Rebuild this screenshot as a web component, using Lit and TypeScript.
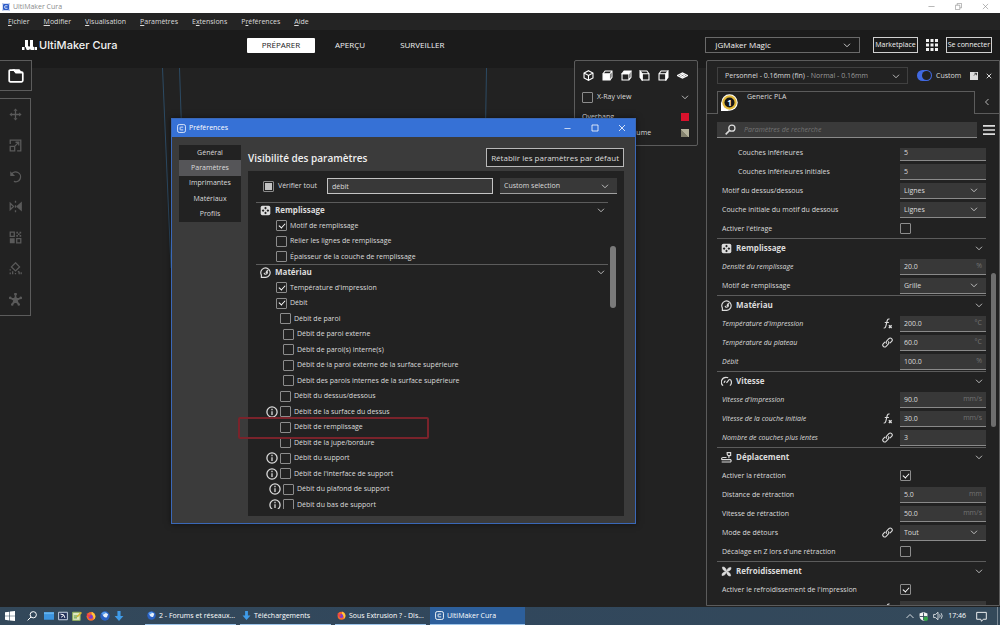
import { LitElement, html, css, svg, nothing, TemplateResult } from "lit";
import { customElement, property } from "lit/decorators.js";
import { classMap } from "lit/directives/class-map.js";

const base = css`
  * { box-sizing: border-box; }
  :host { font-family: "Open Sans", "Noto Sans", sans-serif; font-size: 7px; line-height: 10px; color: #dcdcdc; }
  button, input, select { font: inherit; color: inherit; margin: 0; padding: 0; border: 0; border-radius: 0; background: none; outline: 0; }
  button { display: flex; align-items: center; justify-content: center; white-space: nowrap; }
  svg { display: block; flex: none; }
  .check { appearance: none; flex: none; width: 11px; height: 11px; border: 1px solid #8c8c8c; border-radius: 1px; display: grid; place-items: center; }
  .check:checked::before { content: ""; width: 5px; height: 3px; border: solid #fff; border-width: 0 0 1px 1px; transform: translateY(-1px) rotate(-48deg); }
  .check:indeterminate::before { content: ""; width: 7px; height: 7px; background: #c4c4c4; }
  .combo { position: relative; display: flex; align-items: center; }
  .combo select { appearance: none; width: 100%; height: 100%; padding: 1px 18px 0 4px; }
  .combo svg { position: absolute; right: 8px; pointer-events: none; }
`;

const glyphs: Record<string, TemplateResult> = {
  chevron: svg`<path d="M2 5.500l6 6 6-6"/>`,
  left: svg`<path d="M11 2L5 8l6 6"/>`,
  close: svg`<path d="M2 2l12 12M14 2L2 14"/>`,
  min: svg`<path d="M1 8h14"/>`,
  max: svg`<path d="M2 2h12v12H2z"/>`,
  restore: svg`<path d="M1 5h10v10H1zM5 5V1h10v10h-4"/>`,
  folder: svg`<path d="M1.2 12.500V3.200q0-1 1-1h4l2 2h5.600q1 0 1 1v7.300q0 1.300-1.300 1.300H2.500q-1.300 0-1.300-1.300z"/><path d="M6 2.200h5l2 2.400H8z" fill="currentColor"/>`,
  move: svg`<path d="M8 3v10M3 8h10"/><path d="M8 .5l2.500 3h-5zM8 15.500l2.500-3h-5zM.5 8l3-2.500v5zM15.500 8l-3-2.500v5z" fill="currentColor" stroke="none"/>`,
  scale: svg`<path d="M1.500 6V1.500h13v13H10M1.500 9h5.500v5.500H1.500zM7.500 8.500l4-4M8 4h4v4"/>`,
  rotate: svg`<path d="M3 5.500A6 6 0 1 1 6 14"/><path d="M1.500 1.500v6h6z" fill="currentColor" stroke="none"/>`,
  mirror: svg`<path d="M8 1v2.500M8 6.500v3M8 12.500V15M1.500 4l4 4-4 4z"/><path d="M15 3.500v9L10 8z" fill="currentColor"/>`,
  mesh: svg`<path d="M1.500 1.500h5v5h-5zM9.500 9.500h5v5h-5z"/><path d="M1 9h6v6H1zM9 1h2v2H9zM13 1h2v2h-2zM11 3h2v2h-2zM9 5h2v2H9zM13 5h2v2h-2z" fill="currentColor" stroke="none"/>`,
  blocker: svg`<path d="M8 1l5 5-5 5-5-5z"/><path d="M1.500 9v1.500M1.500 13v2M4.500 11.500v3.500M8 13.500v1.500M11 11.500l1.500 1v2.500M15 12.500v2.500"/>`,
  star: svg`<path d="M8 4l1.200 3H13l-3 2 1.200 4L8 10.700 4.800 13 6 9 3 7h3.800z" fill="currentColor"/><path d="M8 1v3M1 6l3 1M15 6l-3 1M4 14l1-2M12 14l-1-2"/><circle cx="8" cy="1.500" r="1"/><circle cx="1.500" cy="6" r=".8"/><circle cx="14.500" cy="6" r=".8"/><circle cx="4" cy="14.200" r=".8"/><circle cx="12" cy="14.200" r=".8"/>`,
  cube: svg`<path d="M8 1l6.500 3.500v7L8 15l-6.500-3.500v-7zM1.500 4.500L8 8l6.500-3.500M8 8v7"/>`,
  cubeFront: svg`<path d="M1.500 5.500l3-4h10v9l-3 4M11.500 5.500l3-4"/><path d="M1.500 5.500h10v9h-10z" fill="currentColor"/>`,
  cubeTop: svg`<path d="M1.500 5.500h10v9h-10zM14.500 1.500v9l-3 4"/><path d="M1.500 5.500l3-4h10l-3 4z" fill="currentColor"/>`,
  cubeLeft: svg`<path d="M4.500 5.500h10v9h-10zM1.500 1.500h10l3 4"/><path d="M1.500 1.500l3 4v9l-3-4z" fill="currentColor"/>`,
  cubeRight: svg`<path d="M1.500 5.500h10v9h-10zM1.500 5.500l3-4h10"/><path d="M14.500 1.500l-3 4v9l3-4z" fill="currentColor"/>`,
  layers: svg`<path d="M.5 8L8 4.200 15.500 8 8 11.800zM5 8l3-1.500L11 8l-3 1.500z"/>`,
  search: svg`<circle cx="10" cy="6" r="4.500"/><path d="M6.500 9.500L1 15" stroke-width="2.400"/>`,
  burger: svg`<path d="M0 2.500h16M0 8h16M0 13.500h16"/>`,
  apps: svg`<path d="M0 0h4v4H0zM6 0h4v4H6zM12 0h4v4h-4zM0 6h4v4H0zM6 6h4v4H6zM12 6h4v4h-4zM0 12h4v4H0zM6 12h4v4H6zM12 12h4v4h-4z" fill="currentColor" stroke="none"/>`,
  save: svg`<path d="M0 0h16v16H0z" fill="currentColor" stroke="none"/><path d="M8 7l5-5M9 2.500h4v4" stroke="#222"/>`,
  info: svg`<circle cx="8" cy="8" r="6.800"/><path d="M8 7v5M8 3.800v1.800"/>`,
  infill: svg`<rect x="1" y="1" width="14" height="14" rx="2.500" fill="currentColor" stroke="none"/><path d="M8 2.500l2 2-2 2-2-2zM8 9.500l2 2-2 2-2-2zM4.500 6l2 2-2 2-2-2zM11.500 6l2 2-2 2-2-2z" fill="#222" stroke="none"/>`,
  material: svg`<path d="M2 15h6.500A6.800 6.800 0 1 0 2 11.500z"/><path d="M6 8.500a2.400 2.400 0 1 0 2.500-2.700M8.500 9L12 4"/>`,
  speed: svg`<path d="M3 14A6.800 6.800 0 0 1 8 2q1.500 0 2.500.5M13.500 5A6.800 6.800 0 0 1 13 14M8 10l4.500-5.500"/><path d="M4.500 10a3.500 3.500 0 0 1 2-3"/>`,
  travel: svg`<path d="M1 14.500h13q1.500-1.800 0-3.500H1M1 11q-.5-3 2-3h5M11.500 9V6M9 1v2q0 3 5 2V1z"/>`,
  cooling: svg`<path d="M8 8Q2 7 2 1.500q5-1 6 6.500zM8 8Q9 2 14.500 2q1 5-6.500 6zM8 8q6 1 6 6.500Q9 15.500 8 8zM8 8q-1 6-6.500 6Q.5 9 8 8z" fill="currentColor" stroke="currentColor" stroke-width=".8"/>`,
  fx: svg`<path d="M2.500 14.500q2.500.5 3.200-3L7.500 4q.8-3.200 3.500-2.500M4 6.500h6"/><path d="M10 10.500l4 4M14 10.500l-4 4" stroke-width="2"/>`,
  link: svg`<path d="M7 9.500Q5 7.500 7 5.500l3-3q2-2 4 0t0 4l-2.500 2.500M9 6.500q2 2 0 4l-3 3q-2 2-4 0t0-4L4.500 7"/>`,
  cura: svg`<rect x="1" y="1" width="14" height="14" rx="3"/><path d="M11 5.500H6.500q-1 0-1 1v3q0 1 1 1H11"/>`,
  windows: svg`<path d="M0 2l7-1v6.500H0zM8 .8L16 0v7.500H8zM0 8.500h7V15l-7-1zM8 8.500h8V16l-8-1z" fill="currentColor" stroke="none"/>`,
  finder: svg`<circle cx="10" cy="6" r="5"/><path d="M6.500 9.500L1 15"/>`,
  explorer: svg`<path d="M0 2h16v12H0z" fill="#3d95e0" stroke="none"/><path d="M0 2h16v3H0z" fill="#62b2ee" stroke="none"/>`,
  remote: svg`<path d="M1 2h14v12H1z" fill="#22305a" stroke="#c8d4e4"/><path d="M4 5l5 1 2 5M5 10l4-3" stroke="#fff"/>`,
  notes: svg`<path d="M1 2h12v13H1z" fill="#dfe8c0" stroke="#8fae5a"/><path d="M3 8h7M3 11h5" stroke="#5c9a3c"/><path d="M7 9l7-8 2 2-7 7z" fill="#d8b832" stroke="none"/>`,
  firefox: svg`<circle cx="8" cy="8.500" r="7" fill="#f5692c" stroke="none"/><path d="M9 1q6 3 6 8 0 3-3 5 1-6-3-7z" fill="#ffc83a" stroke="none"/><circle cx="7.500" cy="9" r="3.500" fill="#7d3ad0" stroke="none"/><path d="M1 4q2 0 3 2l4 1-3 3q-3 0-4-6z" fill="#f03a50" stroke="none"/>`,
  bird: svg`<circle cx="8" cy="8" r="7.500" fill="#2a62c4" stroke="none"/><path d="M4 6q4-5 9-1l-2 5q-4 2-7-4z" fill="#e6effa" stroke="none"/><path d="M2 4q4-4 9-2L5 6z" fill="#5ba0f0" stroke="none"/>`,
  down: svg`<path d="M5.500 0h5v8H15l-7 8-7-8h4.500z" fill="#3f9be8" stroke="none"/>`,
  up: svg`<path d="M1 12l7-7 7 7"/>`,
  shield: svg`<path d="M8 0l7 2.500v5Q15 13 8 16 1 13 1 7.500v-5z" fill="#f4f4f4" stroke="none"/><path d="M8 1v14M1 8h14" stroke="#34495a"/><circle cx="12" cy="12" r="4" fill="#35a84a" stroke="none"/>`,
  sound: svg`<path d="M1 5.500h3L8 2v12l-4-3.500H1zM10.500 5.500q2 2.500 0 5M13 3.500q3.500 4.500 0 9"/>`,
  bubble: svg`<path d="M1 2h14v10h-4.500L8 15l-1-3H1z"/>`,
};

const icon = (name: string, size = 10, weight = 1.6) => html`<svg width=${size} height=${size} viewBox="0 0 16 16" fill="none" stroke="currentColor" stroke-width=${weight} aria-hidden="true">${glyphs[name]}</svg>`;

interface Setting { label: string; level?: number; custom?: boolean; hint?: string; kind: "text" | "select" | "check"; value?: string; unit?: string; on?: boolean; }
interface Group { title?: string; icon?: string; rows: Setting[]; }

const groups: Group[] = [
  { rows: [
    { label: "Couches inférieures", level: 1, kind: "text", value: "5" },
    { label: "Couches inférieures initiales", level: 1, kind: "text", value: "5" },
    { label: "Motif du dessus/dessous", kind: "select", value: "Lignes" },
    { label: "Couche initiale du motif du dessous", kind: "select", value: "Lignes" },
    { label: "Activer l'étirage", kind: "check" },
  ] },
  { title: "Remplissage", icon: "infill", rows: [
    { label: "Densité du remplissage", custom: true, kind: "text", value: "20.0", unit: "%" },
    { label: "Motif de remplissage", kind: "select", value: "Grille" },
  ] },
  { title: "Matériau", icon: "material", rows: [
    { label: "Température d'impression", custom: true, hint: "fx", kind: "text", value: "200.0", unit: "°C" },
    { label: "Température du plateau", custom: true, hint: "link", kind: "text", value: "60.0", unit: "°C" },
    { label: "Débit", custom: true, kind: "text", value: "100.0", unit: "%" },
  ] },
  { title: "Vitesse", icon: "speed", rows: [
    { label: "Vitesse d'impression", custom: true, kind: "text", value: "90.0", unit: "mm/s" },
    { label: "Vitesse de la couche initiale", custom: true, hint: "fx", kind: "text", value: "30.0", unit: "mm/s" },
    { label: "Nombre de couches plus lentes", custom: true, hint: "link", kind: "text", value: "3" },
  ] },
  { title: "Déplacement", icon: "travel", rows: [
    { label: "Activer la rétraction", kind: "check", on: true },
    { label: "Distance de rétraction", kind: "text", value: "5.0", unit: "mm" },
    { label: "Vitesse de rétraction", kind: "text", value: "50.0", unit: "mm/s" },
    { label: "Mode de détours", hint: "link", kind: "select", value: "Tout" },
    { label: "Décalage en Z lors d'une rétraction", kind: "check" },
  ] },
  { title: "Refroidissement", icon: "cooling", rows: [
    { label: "Activer le refroidissement de l'impression", kind: "check", on: true },
    { label: "", hint: "fx", kind: "text", value: "" },
  ] },
];

@customElement("settings-panel")
class SettingsPanel extends LitElement {
  static styles = [base, css`
    :host { display: flex; flex-direction: column; background: #222; border: 1px solid #5c5c5c; border-radius: 2px 0 0 0; min-height: 0; }
    .profile { display: flex; align-items: center; height: 17px; margin: 6px 7px 7px 10px; }
    .profile .combo { flex: 1; height: 17px; border: 1px solid #404040; padding: 0 7px; margin-right: 9px; justify-content: flex-start; }
    .profile .dim { color: #9a9a9a; }
    .profile .combo svg { right: 7px; }
    .toggle { appearance: none; width: 15px; height: 11px; border-radius: 6px; background: #4169e1; display: flex; justify-content: flex-end; align-items: center; padding: 0 1px; }
    .toggle::before { content: ""; width: 9px; height: 9px; border-radius: 5px; background: #222; }
    .toggleLabel { flex: 0 0 34px; margin-left: 4px; }
    .profile button + button { margin-left: 8px; }
    .tabs { display: flex; height: 23px; }
    .tabs .edge { width: 10px; border-bottom: 1px solid #5c5c5c; }
    .tabs .tab { flex: 1; display: flex; align-items: flex-start; gap: 9px; border: 1px solid #5c5c5c; border-bottom: 0; padding: 0 3px; }
    .tabs .tab svg { margin-top: 2px; }
    .tabs .fold { width: 24px; border-bottom: 1px solid #5c5c5c; }
    .searchRow { display: flex; align-items: center; gap: 6px; margin: 8px 4px 10px 10px; height: 16px; }
    .search { flex: 1; display: flex; align-items: center; gap: 8px; height: 16px; background: #3a3a3a; border-bottom: 1px solid #8a8a8a; padding-left: 8px; }
    .search input { flex: 1; height: 14px; font-style: italic; min-width: 0; }
    .search input::placeholder { color: #747474; }
    .body { flex: 1; display: flex; min-height: 0; padding-left: 10px; }
    .list { flex: 1; overflow: hidden; min-width: 0; }
    .inner { margin-top: -5px; }
    .head { display: flex; align-items: center; gap: 4px; height: 19px; border-top: 1px solid #5c5c5c; padding: 0 3px 0 4px; font-size: 8px; font-weight: 700; }
    .head span { flex: 1; }
    .row { display: grid; grid-template-columns: 1fr 18px 86px; align-items: center; height: 19px; padding-left: 5px; }
    .row label { white-space: nowrap; }
    .row.sub { padding-left: 21px; }
    .row.custom label { font-style: italic; }
    .field, .row .combo { height: 16px; background: #383838; border-bottom: 1px solid #8a8a8a; }
    .field { display: flex; align-items: center; padding: 0 4px; }
    .field input { flex: 1; min-width: 0; width: 0; height: 14px; }
    .field span { color: #737373; }
    .track { width: 13px; padding: 125px 3px 0 5px; }
    .thumb { height: 154px; border-radius: 3px; background: #6e6e6e; }
  `];

  private control(s: Setting, id: string) {
    if (s.kind === "check") return html`<input class="check" type="checkbox" id=${id} .checked=${!!s.on}>`;
    if (s.kind === "select") return html`<div class="combo"><select id=${id}><option>${s.value}</option></select>${icon("chevron", 8)}</div>`;
    return html`<div class="field"><input id=${id} type="text" .value=${s.value ?? ""}>${s.unit ? html`<span>${s.unit}</span>` : nothing}</div>`;
  }

  render() {
    return html`
      <div class="profile">
        <button class="combo"><span>Personnel - 0.16mm (fin) <span class="dim">- Normal - 0.16mm</span></span>${icon("chevron", 8)}</button>
        <input class="toggle" type="checkbox" id="custom" checked>
        <label class="toggleLabel" for="custom">Custom</label>
        <button aria-label="Enregistrer">${icon("save", 8)}</button>
        <button aria-label="Fermer">${icon("close", 6, 2.6)}</button>
      </div>
      <div class="tabs">
        <div class="edge"></div>
        <div class="tab">
          <svg width="17" height="17" viewBox="0 0 17 17"><path d="M0 8v9h8z" fill="#fff"/><circle cx="8.500" cy="8.500" r="8.200" fill="#fff"/><circle cx="8.500" cy="8.500" r="7.200" fill="#e2b93a"/><circle cx="8.500" cy="8.500" r="5" fill="#171717"/><text x="8.500" y="11.500" text-anchor="middle" font-size="8" font-weight="700" fill="#fff">1</text></svg>
          <span>Generic PLA</span>
        </div>
        <button class="fold" aria-label="Réduire">${icon("left", 8)}</button>
      </div>
      <div class="searchRow">
        <div class="search">${icon("search", 11, 1.8)}<input type="text" aria-label="Paramètres de recherche" placeholder="Paramètres de recherche"></div>
        <button aria-label="Menu">${icon("burger", 12, 2.2)}</button>
      </div>
      <div class="body">
        <div class="list"><div class="inner">
          ${groups.map((g, gi) => html`
            ${g.title ? html`<div class="head">${icon(g.icon!, 11, 1.7)}<span>${g.title}</span>${icon("chevron", 8)}</div>` : nothing}
            ${g.rows.map((s, i) => html`
              <div class=${classMap({ row: true, sub: !!s.level, custom: !!s.custom })}>
                <label for=${`s${gi}-${i}`}>${s.label}</label>
                <span>${s.hint ? icon(s.hint, 11) : nothing}</span>
                ${this.control(s, `s${gi}-${i}`)}
              </div>`)}`)}
        </div></div>
        <div class="track"><div class="thumb"></div></div>
      </div>`;
  }
}

interface Item { label: string; level?: number; on?: boolean; info?: boolean; head?: string; }
const items: Item[] = [
  { label: "Remplissage", head: "infill" },
  { label: "Motif de remplissage", on: true },
  { label: "Relier les lignes de remplissage" },
  { label: "Épaisseur de la couche de remplissage" },
  { label: "Matériau", head: "material" },
  { label: "Température d'impression", on: true },
  { label: "Débit", on: true },
  { label: "Débit de paroi", level: 1 },
  { label: "Débit de paroi externe", level: 2 },
  { label: "Débit de paroi(s) interne(s)", level: 2 },
  { label: "Débit de la paroi externe de la surface supérieure", level: 2 },
  { label: "Débit des parois internes de la surface supérieure", level: 2 },
  { label: "Débit du dessus/dessous", level: 1 },
  { label: "Débit de la surface du dessus", level: 1, info: true },
  { label: "Débit de remplissage", level: 1 },
  { label: "Débit de la jupe/bordure", level: 1 },
  { label: "Débit du support", level: 1, info: true },
  { label: "Débit de l'interface de support", level: 1, info: true },
  { label: "Débit du plafond de support", level: 2, info: true },
  { label: "Débit du bas de support", level: 2, info: true },
];

@customElement("preferences-dialog")
class PreferencesDialog extends LitElement {
  static styles = [base, css`
    :host { display: flex; flex-direction: column; background: #3b3b3b; border: 1px solid #3a68b8; box-shadow: 0 0 6px #0008; }
    .bar { display: flex; align-items: center; height: 18px; padding: 0 9px 0 5px; background: #3671d6; color: #fff; }
    .bar span { flex: 1; margin-left: 3px; }
    .bar button { width: 9px; margin-left: 18px; }
    .main { flex: 1; display: flex; min-height: 0; padding: 8px 11px 7px 7px; gap: 7px; }
    nav { display: grid; grid-auto-rows: 1fr; width: 62px; height: 77px; background: #222; }
    nav button.on { background: #555558; }
    .page { flex: 1; display: flex; flex-direction: column; min-width: 0; }
    .top { display: flex; align-items: center; justify-content: space-between; padding: 3px 0 4px; }
    h1 { margin: 0; font-size: 10px; line-height: 14px; font-weight: 600; color: #f0f0f0; }
    .reset { height: 19px; padding: 0 4px; border: 1px solid #b8b8b8; background: #222; font-size: 8px; }
    .box { flex: 1; min-height: 0; background: #222; display: flex; flex-direction: column; padding: 7px 7px 7px 8px; }
    .filter { display: flex; align-items: center; height: 16px; }
    .filter .check { margin-left: 7px; }
    .filter label { flex: 0 0 49px; margin-left: 4px; }
    .filter .query { flex: 1; min-width: 0; height: 16px; border: 1px solid #c4c4c4; background: #383838; padding: 0 4px; }
    .filter .combo { width: 117px; height: 16px; margin-left: 7px; background: #383838; border-bottom: 1px solid #a0a0a0; }
    .body { flex: 1; display: flex; min-height: 0; margin-top: 8px; }
    .list { flex: 1; overflow: hidden; }
    .inner { display: grid; grid-auto-rows: 1fr; height: 310px; }
    .head { display: flex; align-items: center; gap: 4px; border-top: 1px solid #5c5c5c; padding: 0 3px 0 4px; font-size: 8px; font-weight: 700; }
    .head span { flex: 1; }
    .item { display: grid; grid-template-columns: 11px auto; align-items: center; justify-content: start; gap: 3px; padding: 1px 0 0 20px; white-space: nowrap; }
    .item.l1 { padding-left: 24px; }
    .item.l2 { padding-left: 27px; }
    .item.info { grid-template-columns: 11px 11px auto; }
    .item.info.l1 { padding-left: 10px; }
    .item.info.l2 { padding-left: 13px; }
    .marker { position: absolute; z-index: 1; left: 66px; top: 298px; width: 191px; height: 22px; border: 2px solid #7a232b; border-radius: 2px; pointer-events: none; }
    .track { width: 9px; padding: 44px 1px 0 2px; }
    .thumb { height: 62px; border-radius: 3px; background: #7a7a7a; }
  `];

  render() {
    return html`
      <div class="bar">${icon("cura", 9, 1.4)}<span>Préférences</span>
        <button aria-label="Réduire">${icon("min", 7)}</button>
        <button aria-label="Agrandir">${icon("max", 8)}</button>
        <button aria-label="Fermer">${icon("close", 8)}</button>
      </div>
      <div class="main">
        <nav>${["Général", "Paramètres", "Imprimantes", "Matériaux", "Profils"].map((n, i) => html`<button class=${i === 1 ? "on" : ""}>${n}</button>`)}</nav>
        <div class="page">
          <div class="top"><h1>Visibilité des paramètres</h1><button class="reset">Rétablir les paramètres par défaut</button></div>
          <div class="box">
            <div class="filter">
              <input class="check" type="checkbox" id="all" .indeterminate=${true}><label for="all">Vérifier tout</label>
              <input class="query" type="text" aria-label="Filtrer" value="débit">
              <div class="combo"><select aria-label="Sélection"><option>Custom selection</option></select>${icon("chevron", 8)}</div>
            </div>
            <div class="body">
              <div class="list"><div class="inner">
                ${items.map((it, i) => it.head
                  ? html`<div class="head">${icon(it.head, 11, 1.7)}<span>${it.label}</span>${icon("chevron", 8)}</div>`
                  : html`<div class=${classMap({ item: true, info: !!it.info, l1: it.level === 1, l2: it.level === 2 })}>
                      ${it.info ? icon("info", 12, 1.7) : nothing}
                      <input class="check" type="checkbox" id=${`v${i}`} .checked=${!!it.on}><label for=${`v${i}`}>${it.label}</label>
                    </div>`)}
              </div></div>
              <div class="track"><div class="thumb"></div></div>
            </div>
          </div>
        </div>
      </div>
      <div class="marker"></div>`;
  }
}

@customElement("task-bar")
class TaskBar extends LitElement {
  static styles = [base, css`
    :host { display: flex; align-items: stretch; height: 18px; background: linear-gradient(90deg, #33485a, #31475c 50%, #34495a); color: #fff; }
    .quick { display: flex; align-items: center; gap: 4px; width: 145px; padding-left: 5px; }
    .quick .find { margin: 0 3px 0 8px; }
    .tasks { display: flex; gap: 4px; flex: 1; }
    .task { justify-content: flex-start; gap: 3px; flex: 0 1 91px; min-width: 0; border-bottom: 1px solid #9cc4ea; padding-left: 2px; }
    .task.on { background: #2d5f9b; flex-basis: 95px; padding-left: 5px; }
    .tray { display: flex; align-items: center; gap: 5px; padding-right: 2px; }
    .note { margin: 0 5px; }
    .peek { width: 1px; background: #7a8894; height: 18px; }
  `];
  @property({ type: String }) time = "17:46";

  render() {
    const tasks = [["bird", "2 - Forums et réseaux..."], ["down", "Téléchargements"], ["firefox", "Sous Extrusion ? - Dis..."], ["cura", "UltiMaker Cura"]];
    return html`
      <div class="quick">
        <button aria-label="Démarrer">${icon("windows", 10)}</button>
        <button class="find" aria-label="Rechercher">${icon("finder", 10)}</button>
        ${["explorer", "remote", "notes", "firefox", "bird", "down"].map(n => html`<button aria-label=${n}>${icon(n, 10)}</button>`)}
      </div>
      <div class="tasks">${tasks.map(([g, t], i) => html`<button class=${classMap({ task: true, on: i === 3 })}>${icon(g, 9)}<span>${t}</span></button>`)}</div>
      <div class="tray">${icon("up", 8)}${icon("shield", 9)}${icon("sound", 10, 1.2)}<span>${this.time}</span><span class="note">${icon("bubble", 11, 1.3)}</span><span class="peek"></span></div>`;
  }
}

@customElement("app-root")
class AppRoot extends LitElement {
  static styles = [base, css`
    :host { display: flex; flex-direction: column; height: 100vh; background: #222; overflow: hidden; }
    .title { display: flex; align-items: center; height: 13px; padding: 0 11px 0 2px; background: #fff; color: #8a8a8a; }
    .title span { flex: 1; margin-left: 3px; }
    .title button { margin-left: 20px; }
    .logo { color: #fff; background: #2c5cc8; border-radius: 2px; }
    .menu { display: flex; align-items: center; gap: 14px; height: 17px; padding-left: 8px; background: #242424; }
    header { display: flex; align-items: center; height: 30px; background: #1b1b1b; padding: 0 8px 0 22px; color: #f2f2f2; }
    .brand { display: flex; align-items: center; gap: 2px; width: 225px; font-family: Inter, sans-serif; font-size: 11px; line-height: 16px; font-weight: 500; }
    .stages { display: flex; gap: 20px; flex: 1; font-size: 8px; }
    .stages button { height: 15px; }
    .stages .on { width: 68px; background: #fff; color: #1b1b1b; border-radius: 1px; }
    .stages .next { margin-right: 15px; }
    .account { display: flex; align-items: center; gap: 8px; }
    .account .combo { width: 155px; height: 16px; border: 1px solid #6a6a6a; margin-right: 5px; font-size: 8px; }
    .account .combo select { padding: 0 18px 0 9px; }
    .account .box { height: 16px; padding: 0 1px; border: 1px solid #d0d0d0; }
    main { position: relative; flex: 1; min-height: 0; display: flex; align-items: flex-start; background: linear-gradient(#1b1b1b 8px, #222 8px); padding-bottom: 1px; }
    .guides { position: absolute; left: 0; top: 8px; }
    .left { position: relative; flex: 1; display: flex; flex-direction: column; align-items: flex-start; gap: 7px; }
    .open { width: 32px; height: 31px; border: 1px solid #5c5c5c; border-left: 0; background: #222; color: #fff; }
    .tools { width: 31px; height: 218px; display: grid; grid-auto-rows: 1fr; border: 1px solid #5c5c5c; border-left: 0; color: #5a5a5a; }
    .view { position: relative; width: 124px; height: 86px; margin-right: 8px; padding: 9px 8px 0 7px; border: 1px solid #5c5c5c; border-radius: 2px; background: #222; }
    .cams { display: flex; justify-content: space-between; padding: 0 1px; color: #fff; }
    .line { display: flex; align-items: center; gap: 4px; height: 16px; }
    .line.first { height: 22px; margin: 5px 0 1px; }
    .line span, .line label { flex: 1; }
    .red { width: 8px; height: 8px; background: #d8122c; }
    .half { width: 8px; height: 8px; background: linear-gradient(45deg, #85836f 50%, #b5b39c 50%); }
    settings-panel { flex: 0 0 294px; align-self: stretch; }
    preferences-dialog { position: absolute; left: 171px; top: 58px; width: 465px; height: 406px; }
  `];

  render() {
    const menu = [["", "F", "ichier"], ["", "M", "odifier"], ["", "V", "isualisation"], ["", "P", "aramètres"], ["E", "x", "tensions"], ["P", "r", "éférences"], ["", "A", "ide"]];
    return html`
      <div class="title"><i class="logo">${icon("cura", 8)}</i><span>UltiMaker Cura</span>
        <button aria-label="Réduire">${icon("min", 7, 1.4)}</button><button aria-label="Restaurer">${icon("restore", 7, 1.4)}</button><button aria-label="Fermer">${icon("close", 7, 1.4)}</button>
      </div>
      <div class="menu">${menu.map(([a, b, c]) => html`<button>${a}<u>${b}</u>${c}</button>`)}</div>
      <header>
        <div class="brand">
          <svg width="15" height="10" viewBox="0 0 15 10" fill="#fff"><path d="M0 7h2.500v3H0zM3 0h3v5.500q0 1 1 1h1V0h3v6q0 1 1 1V10h-2.500Q8 10 8 8.500 8 10 6 10H5.500Q4 10 4 8q0-1-1-1zM12.500 7H15v3h-2.500z"/></svg>
          <span>UltiMaker Cura</span>
        </div>
        <div class="stages"><button class="on">PRÉPARER</button><button class="next">APERÇU</button><button>SURVEILLER</button></div>
        <div class="account">
          <div class="combo"><select aria-label="Imprimante"><option>JGMaker Magic</option></select>${icon("chevron", 8)}</div>
          <button class="box">Marketplace</button>
          <button aria-label="Applications">${icon("apps", 12)}</button>
          <button class="box">Se connecter</button>
        </div>
      </header>
      <main>
        <svg class="guides" width="600" height="200" fill="none" stroke="#2c4a63"><path d="M162.500 0L171 200M179.500 0l2 60M486.500 0l-1 60"/></svg>
        <div class="left">
          <button class="open" aria-label="Ouvrir">${icon("folder", 16, 1.7)}</button>
          <div class="tools">${["move", "scale", "rotate", "mirror", "mesh", "blocker", "star"].map(n => html`<button aria-label=${n}>${icon(n, 13, 1.6)}</button>`)}</div>
        </div>
        <div class="view">
          <div class="cams">${["cube", "cubeFront", "cubeTop", "cubeLeft", "cubeRight", "layers"].map(n => html`<button aria-label=${n}>${icon(n, 11)}</button>`)}</div>
          <div class="line first"><input class="check" type="checkbox" id="xray"><label for="xray">X-Ray view</label>${icon("chevron", 8)}</div>
          <div class="line"><span>Overhang</span><i class="red"></i></div>
          <div class="line"><span>Outside print volume</span><i class="half"></i></div>
        </div>
        <settings-panel></settings-panel>
        <preferences-dialog></preferences-dialog>
      </main>
      <task-bar></task-bar>`;
  }
}
